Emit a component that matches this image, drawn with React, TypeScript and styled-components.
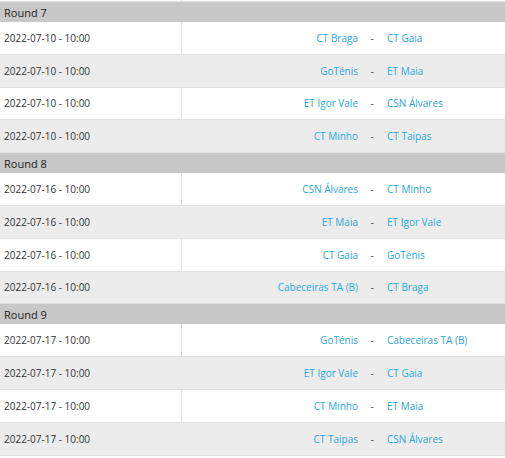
import React from 'react';
import styled, { createGlobalStyle } from 'styled-components';

const GlobalStyle = createGlobalStyle`
  body {
    margin: 0;
    background: #fff;
    font-family: "Open Sans", "Liberation Sans", sans-serif;
  }
`;

const Table = styled.div`
  width: 505px;
  overflow: hidden;
`;

const Stub = styled.div`
  height: 2px;
  display: grid;
  grid-template-columns: 182px 1fr;
  border-bottom: 1px solid #e2e2e2;
  box-sizing: border-box;
  & > div:first-child {
    border-right: 1px solid #e2e2e2;
  }
`;

const RoundHeader = styled.div`
  height: 20px;
  background: #c8c8c8;
  color: #222;
  font-size: 11px;
  line-height: 21px;
  padding-left: 4px;
`;

const Row = styled.div<{ $alt: boolean }>`
  display: grid;
  grid-template-columns: 182px 180px 20px 1fr;
  height: 32.8px;
  box-sizing: border-box;
  border-bottom: 1px solid #e2e2e2;
  background: ${p => (p.$alt ? '#ececec' : '#fff')};
  font-size: 10px;
  align-items: stretch;
`;

const DateCell = styled.div<{ $alt: boolean }>`
  display: flex;
  align-items: center;
  padding-left: 4px;
  color: #333;
  border-right: 1px solid ${p => (p.$alt ? '#ececec' : '#e2e2e2')};
`;

const Team = styled.a<{ $side: 'home' | 'away' }>`
  display: flex;
  align-items: center;
  justify-content: ${p => (p.$side === 'home' ? 'flex-end' : 'flex-start')};
  padding: ${p => (p.$side === 'home' ? '0 4px 0 0' : '0 0 0 5px')};
  color: #2aa8dd;
  text-decoration: none;
  white-space: nowrap;
`;

const Dash = styled.div`
  display: flex;
  align-items: center;
  justify-content: center;
  color: #444;
`;

type Match = [string, string, string];

const rounds: { name: string; matches: Match[] }[] = [
  {
    name: 'Round 7',
    matches: [
      ['2022-07-10 - 10:00', 'CT Braga', 'CT Gaia'],
      ['2022-07-10 - 10:00', 'GoTénis', 'ET Maia'],
      ['2022-07-10 - 10:00', 'ET Igor Vale', 'CSN Álvares'],
      ['2022-07-10 - 10:00', 'CT Minho', 'CT Taipas'],
    ],
  },
  {
    name: 'Round 8',
    matches: [
      ['2022-07-16 - 10:00', 'CSN Álvares', 'CT Minho'],
      ['2022-07-16 - 10:00', 'ET Maia', 'ET Igor Vale'],
      ['2022-07-16 - 10:00', 'CT Gaia', 'GoTénis'],
      ['2022-07-16 - 10:00', 'Cabeceiras TA (B)', 'CT Braga'],
    ],
  },
  {
    name: 'Round 9',
    matches: [
      ['2022-07-17 - 10:00', 'GoTénis', 'Cabeceiras TA (B)'],
      ['2022-07-17 - 10:00', 'ET Igor Vale', 'CT Gaia'],
      ['2022-07-17 - 10:00', 'CT Minho', 'ET Maia'],
      ['2022-07-17 - 10:00', 'CT Taipas', 'CSN Álvares'],
    ],
  },
];

export default function App() {
  return (
    <>
      <GlobalStyle />
      <Table>
        <Stub>
          <div />
          <div />
        </Stub>
        {rounds.map(r => (
          <React.Fragment key={r.name}>
            <RoundHeader>{r.name}</RoundHeader>
            {r.matches.map(([date, home, away], i) => {
              const alt = i % 2 === 1;
              return (
                <Row key={i} $alt={alt}>
                  <DateCell $alt={alt}>{date}</DateCell>
                  <Team $side="home" href="#">{home}</Team>
                  <Dash>-</Dash>
                  <Team $side="away" href="#">{away}</Team>
                </Row>
              );
            })}
          </React.Fragment>
        ))}
      </Table>
    </>
  );
}
